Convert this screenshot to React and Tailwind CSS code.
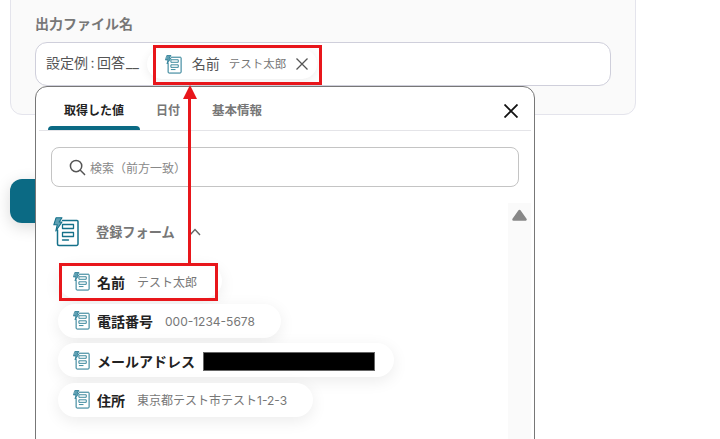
import React from "react";

const font = { fontFamily: 'Inter,"Noto Sans CJK JP","Noto Sans",sans-serif' };

function FormIcon({ className }) {
  return (
    <svg viewBox="0 0 26 30" className={className} fill="none" stroke="#15718a" strokeWidth="1.5" strokeLinejoin="round" strokeLinecap="round">
      <path d="M9.5 3.5H24a1 1 0 0 1 1 1V27a1.5 1.5 0 0 1-1.5 1.5H6A1.5 1.5 0 0 1 4.5 27V13" />
      <rect x="9.5" y="7.5" width="11" height="4" strokeWidth="1.3" />
      <rect x="9.5" y="15.5" width="11" height="4" strokeWidth="1.3" />
      <path d="M9.5 23H15.5" strokeWidth="1.3" />
      <path d="M3 0.8H9L6.2 5H9L2.8 14L4.2 7.8H0.8Z" fill="#5fa0b3" strokeWidth="1.1" />
    </svg>
  );
}

function Chip({ name, value, widthClass, children }) {
  return (
    <div className={`flex items-center h-[34px] rounded-[17px] bg-white shadow-[0_4px_16px_rgba(0,0,0,0.08)] pl-[15px] ${widthClass}`}>
      <FormIcon className="w-[17px] h-[19px] shrink-0" />
      <span className="ml-[7px] pt-[3px] text-[14px] font-bold text-[#222] leading-none">{name}</span>
      {value && <span className="ml-[12px] pt-[3px] text-[12px] text-[#777] leading-none">{value}</span>}
      {children}
    </div>
  );
}

export default function App() {
  return (
    <div className="relative w-[720px] h-[439px] overflow-hidden bg-white" style={font}>
      <div className="ml-[10px] -mt-[20px] w-[626px] h-[135px] bg-[#fafafa] border border-[#e4e4ec] rounded-[12px] pt-[33px] pl-[24px]">
        <div className="text-[14px] leading-[20px] font-bold text-[#777]">出力ファイル名</div>
        <div className="mt-[8px] w-[576px] h-[44px] bg-white border border-[#cfcfdb] rounded-[12px] flex items-center pl-[10px]">
          <span className="text-[14px] leading-none text-[#555] mb-[3px]">設定例<span className="px-[2.5px]">:</span>回答<span className="ml-[1px]">__</span></span>
          <div className="ml-[8px] h-[30px] w-[170px] rounded-[15px] bg-white shadow-[0_2px_10px_rgba(0,0,0,0.07)] flex items-center pl-[18px]">
            <FormIcon className="w-[17px] h-[19px] shrink-0" />
            <span className="ml-[10px] text-[14px] text-[#555] leading-none">名前</span>
            <span className="ml-[9px] pt-[1px] text-[11.5px] text-[#777] leading-none">テスト太郎</span>
            <svg viewBox="0 0 12 12" className="ml-[10px] w-[12px] h-[12px]" stroke="#555" strokeWidth="1.3" fill="none"><path d="M0.5 0.5L11.5 11.5M11.5 0.5L0.5 11.5" /></svg>
          </div>
        </div>
      </div>

      <div className="mt-[64px] ml-[10px] w-[100px] h-[44px] rounded-[12px] bg-[#0b6a84] shadow-[0_4px_16px_rgba(0,0,0,0.15)]" />

      {/* Dropdown */}
      <div className="absolute left-[35px] top-[86px] w-[500px] h-[380px] bg-white border border-[#777] rounded-t-[12px] px-[3px]">
        <div className="relative h-[44px] border-b border-[#e4e4e8] flex items-center text-[12px] font-bold">
          <div className="relative w-[92px] ml-[9px] h-full flex items-center justify-center text-[#222] pt-[5px]">
            取得した値
            <div className="absolute left-0 right-0 bottom-0 h-[4px] bg-[#0b6a84] rounded-t-[4px]" />
          </div>
          <span className="ml-[16px] text-[#777] pt-[5px]">日付</span>
          <span className="ml-[32px] text-[12.5px] text-[#777] pt-[5px]">基本情報</span>
          <svg viewBox="0 0 14 14" className="absolute left-[465px] top-[17px] w-[14px] h-[14px]" stroke="#111" strokeWidth="1.8" fill="none"><path d="M0.5 0.5L13.5 13.5M13.5 0.5L0.5 13.5" /></svg>
        </div>
        <div className="ml-[12px] mt-[16px] w-[468px] h-[40px] border border-[#c4c4c4] rounded-[8px] flex items-center pl-[17px]">
          <svg viewBox="0 0 18 18" className="w-[17px] h-[17px]" stroke="#555" strokeWidth="1.6" fill="none" strokeLinecap="round"><circle cx="7.5" cy="7.5" r="6" /><path d="M12 12L16.5 16.5" /></svg>
          <span className="ml-[4px] pt-[4px] text-[12px] text-[#888]">検索（前方一致）</span>
        </div>
        <div className="relative mt-[16px]">
          <div className="absolute left-[469px] top-0 w-[23px] h-[240px] bg-[#fafafa] flex justify-center pt-[6px]">
            <svg viewBox="0 0 15 12" className="w-[15px] h-[12px]" fill="#888" stroke="#888" strokeWidth="2.5" strokeLinejoin="round"><path d="M7.5 2L13.5 10.5H1.5Z" /></svg>
          </div>
          <div className="flex items-center pt-[14px] pl-[14px]">
            <FormIcon className="w-[26px] h-[30px] shrink-0" />
            <span className="ml-[17px] pt-[2px] text-[13.2px] font-bold text-[#777]">登録フォーム</span>
            <svg viewBox="0 0 12 8" className="ml-[14px] w-[12px] h-[8px]" stroke="#666" strokeWidth="1.4" fill="none"><path d="M1 7L6 1.5L11 7" /></svg>
          </div>
          <div className="mt-[17px] pl-[19px] flex flex-col gap-[5.5px] items-start">
            <Chip name="名前" value="テスト太郎" widthClass="w-[164px]" />
            <Chip name="電話番号" value="000-1234-5678" widthClass="w-[223px]" />
            <Chip name="メールアドレス" widthClass="w-[336px]">
              <div className="ml-[8px] mt-[3px] w-[172px] h-[19px] bg-black border border-[#666]" />
            </Chip>
            <Chip name="住所" value="東京都テスト市テスト1-2-3" widthClass="w-[255px]" />
          </div>
        </div>
      </div>

      {/* Annotations */}
      <div className="absolute left-[153px] top-[45px] w-[169px] h-[40px] border-[3px] border-[#e8161b]" />
      <div className="absolute left-[59px] top-[263px] w-[159px] h-[38px] border-[3px] border-[#e8161b]" />
      <div className="absolute left-[188px] top-[98px] w-[3px] h-[165px] bg-[#e8161b]" />
      <svg viewBox="0 0 14 14" className="absolute left-[183px] top-[85px] w-[14px] h-[14px]"><path d="M7 0L14 14H0Z" fill="#e8161b" /></svg>
    </div>
  );
}
